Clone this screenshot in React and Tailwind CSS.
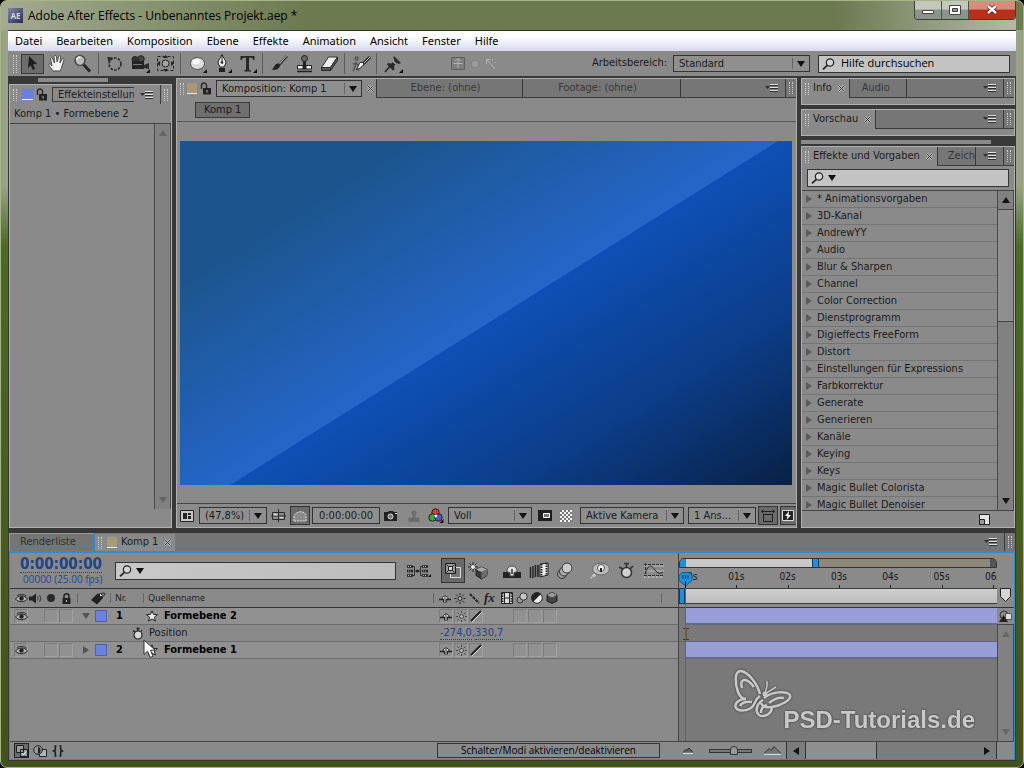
import { useState } from "react";

const presets = [
  "* Animationsvorgaben",
  "3D-Kanal",
  "AndrewYY",
  "Audio",
  "Blur & Sharpen",
  "Channel",
  "Color Correction",
  "Dienstprogramm",
  "Digieffects FreeForm",
  "Distort",
  "Einstellungen für Expressions",
  "Farbkorrektur",
  "Generate",
  "Generieren",
  "Kanäle",
  "Keying",
  "Keys",
  "Magic Bullet Colorista",
  "Magic Bullet Denoiser",
];

const menus = ["Datei", "Bearbeiten", "Komposition", "Ebene", "Effekte", "Animation", "Ansicht", "Fenster", "Hilfe"];

/* ---------- small shared pieces ---------- */

function Icon({ w = 16, h = 16, children, className = "" }) {
  return (
    <svg width={w} height={h} viewBox={`0 0 ${w} ${h}`} className={`shrink-0 ${className}`} aria-hidden="true">
      {children}
    </svg>
  );
}

function Grip() {
  return <span className="h-3 w-1 shrink-0 border-x border-dotted border-[#d0d0d0]" />;
}

function PanelMenu() {
  return (
    <button aria-label="Panelmenü" className="shrink-0">
      <Icon w={14} h={10}>
        <path d="M0 3h5L2.500 6z" fill="#2e2e2e" />
        <path d="M5 1.500h8M5 4.500h8M5 7.500h8" stroke="#e0e0e0" />
        <path d="M5 2.500h8M5 5.500h8M5 8.500h8" stroke="#303030" />
      </Icon>
    </button>
  );
}

function PanelEnd() {
  return (
    <div className="ml-auto flex items-center self-stretch">
      <PanelMenu />
      <div className="ml-1.5 flex items-center self-stretch border-l border-[#3a3a3a] px-[3px]">
        <Grip />
      </div>
    </div>
  );
}

function Cross() {
  return (
    <Icon w={7} h={7}>
      <path d="M.5.500l6 6M6.500.500l-6 6" stroke="#c4c4c4" strokeWidth="2" />
      <path d="M.5.500l6 6M6.500.500l-6 6" stroke="#2a2a2a" />
    </Icon>
  );
}

function Swatch() {
  return <span className="h-[11px] w-[10px] shrink-0 border-b border-[#efefef] bg-[#a89a78]" />;
}

function Lock() {
  return (
    <Icon w={11} h={13}>
      <path d="M1.500 7V3.500a2.500 2.500 0 0 1 5 0V6" fill="none" stroke="#2c2c2c" strokeWidth="1.500" />
      <path d="M3 6h8v6.500H3z" fill="#242424" />
      <path d="M6.500 8h1v2.500h-1z" fill="#bbb" />
    </Icon>
  );
}

function Magnifier() {
  return (
    <Icon w={13} h={12}>
      <circle cx="8" cy="4.500" r="3.700" fill="#d5d5d5" stroke="#222" strokeWidth="1.200" />
      <path d="M5.300 7.300L1 11.300" stroke="#222" strokeWidth="1.700" />
    </Icon>
  );
}

function Arrow({ dir = "down", color = "#111" }) {
  const paths = {
    down: "M0 1h8L4 7z",
    up: "M0 7h8L4 1z",
    left: "M7 0v8L1 4z",
    right: "M1 0v8l6-4z",
  };
  return (
    <Icon w={8} h={8}>
      <path d={paths[dir]} fill={color} />
    </Icon>
  );
}

function Dropdown({ label, value, className = "" }) {
  return (
    <div className={`relative flex h-[17px] shrink-0 items-center border border-[#333] bg-[#8f8f8f] ${className}`}>
      <select
        aria-label={label}
        defaultValue={value}
        className="h-full w-full appearance-none bg-transparent pr-4 pl-[5px] text-[11px] leading-[15px] outline-none"
      >
        <option>{value}</option>
      </select>
      <span className="pointer-events-none absolute right-0 flex h-[11px] items-center border-l border-[#666] px-1">
        <Arrow />
      </span>
    </div>
  );
}

function VScroll({ active, thumb }) {
  const color = active ? "#111" : "#666";
  return (
    <div className="flex w-[17px] shrink-0 flex-col border-x border-[#4a4a4a] bg-[#818181]">
      <button aria-label="Nach oben" className="flex h-[18px] items-center justify-center">
        <Arrow dir="up" color={color} />
      </button>
      <div className="flex-1">{thumb && <div className="h-2/5 border-y border-[#444] bg-[#8f8f8f]" />}</div>
      <button aria-label="Nach unten" className="flex h-[18px] items-center justify-center">
        <Arrow color={color} />
      </button>
    </div>
  );
}

/* ---------- window frame ---------- */

function TitleBar() {
  return (
    <header className="-mx-[7px] flex h-[29px] shrink-0 items-center justify-between rounded-t-[6px] bg-linear-to-r from-[#a3ab92] via-[#6c7a50] via-30% to-[#6c7a50] to-80% px-[7px]">
      <div className="flex items-center gap-[5px]">
        <div className="flex size-[15px] items-center justify-center bg-linear-to-br from-[#8588ac] to-[#2b2d4d] font-['Noto_Sans'] text-[8px] font-bold text-[#d8d8ee]">
          AE
        </div>
        <h1 className="font-['Open_Sans',sans-serif] text-[12px] text-black">
          Adobe After Effects - Unbenanntes Projekt.aep *
        </h1>
      </div>
      <div className="flex h-full flex-1 justify-end bg-linear-to-r from-transparent from-75% to-[#b3baa8]">
        <div className="flex h-[19px] self-start overflow-hidden rounded-b-[4px] border border-t-0 border-[#3c4138]">
          <button
            aria-label="Minimieren"
            className="flex w-[27px] items-center justify-center border-r border-[#4c5248] bg-linear-to-b from-[#c3c8bd] from-45% to-[#8c9388] to-50%"
          >
            <Icon w={12} h={12}>
              <path d="M.5 6.500h11v3H.5z" fill="#fff" stroke="#444" />
            </Icon>
          </button>
          <button
            aria-label="Maximieren"
            className="flex w-[27px] items-center justify-center border-r border-[#4c5248] bg-linear-to-b from-[#c3c8bd] from-45% to-[#8c9388] to-50%"
          >
            <Icon w={12} h={12}>
              <path d="M.5 1.500h11v9H.5z" fill="#fff" stroke="#444" />
              <path d="M3.500 4.500h5v3h-5z" fill="#8c9388" stroke="#444" />
            </Icon>
          </button>
          <button
            aria-label="Fenster schließen"
            className="flex w-[46px] items-center justify-center bg-linear-to-b from-[#d88c7a] from-45% to-[#b8301d] to-50%"
          >
            <Icon w={12} h={12}>
              <path d="M2 2l8 7M10 2L2 9" stroke="#4d1a14" strokeWidth="4" />
              <path d="M2 2l8 7M10 2L2 9" stroke="#fff" strokeWidth="2.400" />
            </Icon>
          </button>
        </div>
      </div>
    </header>
  );
}

function MenuBar() {
  return (
    <nav className="flex h-[21px] shrink-0 items-center gap-[14px] border-t border-[#333] bg-linear-to-b from-white from-30% to-[#d6daee] pl-[7px] font-['Noto_Sans',sans-serif] text-[11px] text-black">
      {menus.map((m) => (
        <button key={m}>{m}</button>
      ))}
    </nav>
  );
}

/* ---------- toolbar ---------- */

const corner = <path d="M22 16v4h-4z" fill="#111" />;

const tools = [
  {
    name: "Auswahl",
    art: <path d="M9 5l8 8-4 .3 2 4.700-2.200 1-2-4.700L8 17z" transform="translate(-1 -2)" fill="#1d1d1d" />,
  },
  {
    name: "Hand",
    art: (
      <path
        d="M7 18c-2-3-4-5-4.500-7 1-1 2 0 3.500 2L4.500 5.500c.5-1.500 2-1 2.300.5L8.500 10 8 3.500c.5-1.500 2-1.500 2.400 0L11.200 9l1.300-5.500c.6-1.200 2.200-.8 2 .6L14 10l2-4c1-1 2.300-.3 1.900 1L16 13c-.4 2-1 3.500-2 5z"
        fill="#f2f2f2"
        stroke="#4a4a4a"
      />
    ),
  },
  {
    name: "Zoom",
    art: (
      <>
        <path d="M12.500 11.500l6.500 7" stroke="#262626" strokeWidth="3" />
        <circle cx="9" cy="7.500" r="5" fill="#bcbcbc" stroke="#4a4a4a" strokeWidth="1.600" />
        <path d="M5.500 7a3.500 3.500 0 0 1 4-3" stroke="#fff" strokeWidth="1.500" fill="none" />
      </>
    ),
    sep: true,
  },
  {
    name: "Drehen",
    art: (
      <>
        <circle cx="12" cy="11" r="6" fill="none" stroke="#2a2a2a" strokeWidth="1.700" strokeDasharray="2.400 1.400" />
        <path d="M4 4l6 .5-4 5z" fill="#2a2a2a" />
      </>
    ),
  },
  {
    name: "Kamera",
    art: (
      <>
        <circle cx="7" cy="6.500" r="3" fill="#333" stroke="#222" />
        <circle cx="13" cy="6" r="3.300" fill="#444" stroke="#222" />
        <path d="M4 8h12v8H4z" fill="#242424" />
        <path d="M16 12l5-2v6l-5-1z" fill="#2b2b2b" />
        <path d="M5 11.500h9" stroke="#777" />
        {corner}
      </>
    ),
  },
  {
    name: "Ausschnitt",
    art: (
      <>
        <path d="M4.500 3.500h16v14h-16z" fill="none" stroke="#222" strokeDasharray="3 2" />
        <circle cx="12.500" cy="10.500" r="3.500" fill="#a5a5a5" stroke="#222" />
        <path d="M12.500 2l2.500 3h-5zM12.500 19l2.500-3h-5zM4 10.500L7 8v5zM21 10.500L18 8v5z" fill="#222" />
      </>
    ),
    sep: true,
  },
  {
    name: "Ellipse",
    art: (
      <>
        <ellipse cx="12.500" cy="10.500" rx="7" ry="6" fill="#dcdcdc" stroke="#505050" />
        <ellipse cx="11" cy="8.500" rx="4" ry="2.700" fill="#fafafa" />
        {corner}
      </>
    ),
  },
  {
    name: "Zeichenstift",
    art: (
      <>
        <path d="M12 1.500c1 3 4 5.500 4 8.500l-2 4h-4l-2-4c0-3 3-5.500 4-8.500z" fill="#ececec" stroke="#222" />
        <path d="M12 3v6" stroke="#222" />
        <circle cx="12" cy="9.500" r="1.300" fill="#222" />
        <path d="M9 15h6v4H9z" fill="#222" />
        {corner}
      </>
    ),
  },
  {
    name: "Text",
    art: (
      <>
        <path
          d="M5.500 3h14v4h-1.200c-.4-1.700-1-2.300-2.600-2.300H14v11c0 1.300.4 1.600 2 1.800V18.500H9v-1c1.600-.2 2-.5 2-1.800v-11H9.300C7.700 4.700 7.100 5.300 6.700 7H5.500z"
          fill="#272727"
        />
        {corner}
      </>
    ),
    sep: true,
  },
  {
    name: "Pinsel",
    art: (
      <>
        <path d="M20 3l-8 9" stroke="#202020" strokeWidth="2.400" />
        <path d="M20 2.500l-8 9" stroke="#ccc" strokeWidth="1" />
        <path d="M12.500 11c1 1.500.5 3.500-2 5-2 1-4 1-6 .5 2.500-1 2.500-3.500 4-5 1.200-1 3-1.300 4-.5z" fill="#202020" />
      </>
    ),
  },
  {
    name: "Kopierstempel",
    art: (
      <>
        <circle cx="12.500" cy="5.500" r="3" fill="#666" stroke="#222" />
        <path d="M11 8.500h3v4h-3z" fill="#222" />
        <path d="M5.500 12.500h14v3.500h-14z" fill="#eee" stroke="#222" />
        <path d="M10.500 12.500h4v3.500h-4z" fill="#222" />
        <path d="M5 18.500h15" stroke="#222" strokeWidth="1.500" />
      </>
    ),
  },
  {
    name: "Radiergummi",
    art: (
      <>
        <path d="M11.500 4h9l-7 10.500h-9z" fill="#ededed" stroke="#303030" />
        <path d="M4.500 14.500h9v3h-9zM13.500 17.500l7-10V4l-7 10.500z" fill="#555" stroke="#2a2a2a" />
      </>
    ),
    sep: true,
  },
  {
    name: "Roto-Pinsel",
    art: (
      <>
        <path d="M4 18c2-3 2-6 3-8l-3 1M7 10l3 3-1 5M7.500 4a1.500 1.500 0 1 0 .1 0" stroke="#555" fill="none" strokeWidth="1.500" />
        <path d="M21 4l-7 7" stroke="#222" strokeWidth="3" />
        <path d="M21 4l-7 7" stroke="#ccc" />
        <path d="M14 9.500c1.500 1.500 0 5-6.500 7 1.500-2 2-6 4-7z" fill="#f0f0f0" stroke="#222" />
      </>
    ),
    sep: true,
  },
  {
    name: "Marionette",
    art: (
      <>
        <path
          d="M12 2l7 7-2 1-2-1-3 3 .5 3.500-1.500 1L5 10.500l1-1.500 3.500.5 3-3L11.500 4z"
          fill="#2a2a2a"
          transform="translate(1 1)"
        />
        <path d="M9 13l-5 6" stroke="#222" strokeWidth="1.400" />
        <path d="M12 8l3 3" stroke="#aaa" strokeWidth="1.500" />
        {corner}
      </>
    ),
  },
];

function Toolbar() {
  const [tool, setTool] = useState("Auswahl");
  return (
    <div className="flex h-[25px] shrink-0 items-center bg-[#8a8a8a] pr-[6px] pl-[5px]">
      <span className="mr-[3px] h-[18px] w-1 border-x border-dotted border-[#d0d0d0]" />
      {tools.map((t) => (
        <div key={t.name} className="flex shrink-0 items-center">
          <button
            aria-label={t.name}
            onClick={() => setTool(t.name)}
            className={
              tool === t.name
                ? "mx-px flex h-5 w-[23px] items-center justify-center border border-[#3a3a3a] bg-[#6c6c6c]"
                : "flex h-5 w-[25px] items-center justify-center"
            }
          >
            <Icon w={24} h={21}>
              {t.art}
            </Icon>
          </button>
          {t.sep && <span className="mx-[3px] h-[21px] w-px bg-[#5c5c5c]" />}
        </div>
      ))}
      <div className="ml-[46px] flex items-center gap-1 opacity-60">
        <Icon w={14} h={13}>
          <path d="M.5.500h13v12H.5z" fill="#777" stroke="#444" />
          <path d="M7 2v9M2.500 6.500h9M4 4L7 1.500 10 4" stroke="#ccc" fill="none" />
        </Icon>
        <Icon w={12} h={12}>
          <circle cx="6" cy="6" r="4" fill="#a9a9a9" stroke="#777" />
        </Icon>
        <Icon w={12} h={12}>
          <path d="M1.500 6V1.500H6M2 2l8 9M7 2h1M10 4v1" stroke="#ccc" fill="none" />
        </Icon>
      </div>
      <span className="mr-1.5 ml-auto text-[11px]">Arbeitsbereich:</span>
      <Dropdown label="Arbeitsbereich" value="Standard" className="w-[137px]" />
      <label className="ml-2 flex h-[18px] w-[192px] shrink-0 items-center gap-1.5 border border-[#333] bg-[#c4c4c4] pl-[3px]">
        <Magnifier />
        <input
          aria-label="Hilfe durchsuchen"
          placeholder="Hilfe durchsuchen"
          className="w-full min-w-0 font-['Open_Sans',sans-serif] text-[11px] outline-none placeholder:text-black placeholder:opacity-100"
        />
      </label>
    </div>
  );
}

/* ---------- upper panels ---------- */

function EffectControls() {
  return (
    <aside className="flex w-[163px] shrink-0 flex-col">
      <div className="mt-[2px] mr-16 mb-[2px] ml-[29px] h-1 shrink-0 bg-[#8a8a8a]" />
      <div className="flex min-h-0 flex-1 flex-col border border-[#b0b0b0] bg-[#8a8a8a]">
        <div className="flex h-[19px] shrink-0 items-center gap-[3px] pl-[3px]">
          <Grip />
          <span className="ml-0.5 h-[11px] w-[11px] shrink-0 border-b border-[#efefef] bg-[#6a7fdc]" />
          <Lock />
          <button
            role="tab"
            className="ml-0.5 h-[15px] w-[82px] shrink-0 overflow-hidden border border-r-0 border-[#3a3a3a] pl-[5px] text-left text-[11px] leading-[13px] whitespace-nowrap"
          >
            Effekteinstellungen
          </button>
          <PanelEnd />
        </div>
        <p className="h-[20px] shrink-0 border-b border-[#444] pl-1 text-[11px] leading-[19px]">Komp 1 • Formebene 2</p>
        <div className="flex min-h-0 flex-1 justify-end pb-[18px]">
          <VScroll />
        </div>
      </div>
    </aside>
  );
}

function ViewerTabs() {
  return (
    <div className="flex h-[19px] shrink-0 items-stretch text-[11px]">
      <div className="flex items-center gap-[3px] pr-[2px] pl-[3px]">
        <Grip />
        <Swatch />
        <Lock />
        <Dropdown label="Komposition" value="Komposition: Komp 1" className="mx-0.5 w-[146px]" />
        <button aria-label="Schließen" className="shrink-0">
          <Cross />
        </button>
      </div>
      <div className="flex flex-1 items-stretch border-b border-l border-[#3a3a3a] bg-[#767676] text-[#383838]">
        <button role="tab" className="w-[146px] shrink-0 border-r border-[#3a3a3a] pr-2">
          Ebene: (ohne)
        </button>
        <button role="tab" className="w-[158px] shrink-0 border-r border-[#3a3a3a] pr-2">
          Footage: (ohne)
        </button>
        <PanelEnd />
      </div>
    </div>
  );
}

function Artwork() {
  return (
    <svg viewBox="0 0 612 344" preserveAspectRatio="none" className="block size-full" role="img" aria-label="Komp 1">
      <defs>
        <linearGradient id="upper" gradientUnits="userSpaceOnUse" x1="64" y1="102" x2="169" y2="269">
          <stop offset="0" stopColor="#1c558d" />
          <stop offset="1" stopColor="#2466c9" />
        </linearGradient>
        <linearGradient id="lower" gradientUnits="userSpaceOnUse" x1="169" y1="269" x2="328" y2="523">
          <stop offset="0" stopColor="#0d50b5" />
          <stop offset="0.5" stopColor="#0c3d88" />
          <stop offset="1" stopColor="#082144" />
        </linearGradient>
      </defs>
      <path d="M0 0h612v344H0z" fill="url(#lower)" />
      <path d="M0 0h598L50 344H0z" fill="url(#upper)" />
    </svg>
  );
}

const pressed = "flex h-[19px] shrink-0 items-center justify-center border border-[#333] bg-[#6b6b6b]";

function ViewerFooter() {
  return (
    <div className="flex h-[24px] shrink-0 items-center overflow-hidden border-t border-[#444] pl-[3px] text-[11px]">
      <Icon w={14} h={12}>
        <path d="M.5.500h13v11H.5z" fill="#c9c9c9" stroke="#222" />
        <path d="M3 3h4v6H3zM8 3h3v2H8zM8 6h3v3H8z" fill="#222" />
      </Icon>
      <Dropdown label="Vergrößerung" value="(47,8%)" className="ml-[5px] w-[68px]" />
      <Icon w={15} h={13} className="mx-1">
        <path d="M1.500 3.500h12v7h-12zM7.500 0v13M0 7h15" fill="none" stroke="#2a2a2a" />
        <path d="M2.500 4.500h4v2h-4zM8.500 8h4v1.500h-4z" fill="#d0d0d0" />
      </Icon>
      <button aria-label="Maske" className={`${pressed} w-5`}>
        <Icon w={14} h={12}>
          <path d="M1 11V6c2-5 10-6 12-1v6z" fill="#8c8c8c" stroke="#e0e0e0" strokeDasharray="2 1" />
        </Icon>
      </button>
      <button className="ml-[2px] h-[17px] w-[68px] shrink-0 border border-[#333] bg-[#8f8f8f] leading-[15px]">
        0:00:00:00
      </button>
      <Icon w={14} h={12} className="ml-1">
        <path d="M0 2h4l1-1h4l1 1h3v9H0z" fill="#222" />
        <circle cx="6.500" cy="6.500" r="2.500" fill="#777" stroke="#ddd" />
        <path d="M11 3.500h2" stroke="#ddd" />
      </Icon>
      <Icon w={12} h={14} className="ml-[10px]">
        <circle cx="6" cy="4" r="2.500" fill="#6c6c6c" />
        <path d="M4.500 6h3v2.500h4V13H.5V8.500h4z" fill="#6c6c6c" />
      </Icon>
      <Icon w={16} h={15} className="ml-2">
        <circle cx="7.500" cy="4.500" r="3.700" fill="#d33a3a" stroke="#222" />
        <circle cx="4.500" cy="9.500" r="3.700" fill="#36a546" stroke="#222" />
        <circle cx="10.500" cy="9.500" r="3.700" fill="#5a50c0" stroke="#222" />
        <path d="M6 7.500l2-1 1.500 1L8 10z" fill="#eee" />
        <path d="M15.500 11v4h-4z" fill="#111" />
      </Icon>
      <Dropdown label="Auflösung" value="Voll" className="ml-1 w-[84px]" />
      <Icon w={14} h={11} className="ml-[6px]">
        <path d="M0 0h14v11H0z" fill="#1e1e1e" />
        <path d="M5.500 3.500h6v4h-6z" fill="#777" stroke="#fff" />
      </Icon>
      <Icon w={12} h={12} className="mx-[8px]">
        <path d="M0 0h12v12H0z" fill="#f2f2f2" />
        <path d="M0 1h12M0 5h12M0 9h12" stroke="#777" strokeWidth="2" strokeDasharray="2 2" />
        <path d="M2 3h10M2 7h10M2 11h10" stroke="#777" strokeWidth="2" strokeDasharray="2 2" />
      </Icon>
      <Dropdown label="3D-Ansicht" value="Aktive Kamera" className="w-[104px]" />
      <Dropdown label="Ansichten" value="1 Ans..." className="ml-1 w-[68px]" />
      <button aria-label="Pixelseitenverhältnis" className={`${pressed} ml-[2px] w-5`}>
        <Icon w={14} h={13}>
          <path d="M1 2.500h12M2.500.500L.5 2.500l2 2M11.500.500l2 2-2 2M2.500 5.500h9v7h-9z" fill="none" stroke="#1d1d1d" />
        </Icon>
      </button>
      <button aria-label="Schnelle Vorschau" className={`${pressed} ml-[2px] w-5 justify-start`}>
        <Icon w={14} h={13}>
          <path d="M1.500 1.500h11v10h-11z" fill="#222" stroke="#ddd" />
          <path d="M8 2L4 7h2.500L5.500 11 10 6H7.500z" fill="#fff" />
        </Icon>
      </button>
    </div>
  );
}

function Viewer() {
  return (
    <section className="mt-[2px] flex min-w-0 flex-1 flex-col border border-[#b0b0b0] bg-[#8a8a8a]">
      <ViewerTabs />
      <div className="flex h-[24px] shrink-0 items-center border-b border-[#555] pl-[18px]">
        <button className="h-4 border border-[#3a3a3a] bg-[#6f6f6f] px-2 text-[11px] leading-[14px]">Komp 1</button>
      </div>
      <div className="min-h-0 flex-1 pt-[19px] pr-[4px] pb-[18px] pl-[3px]">
        <Artwork />
      </div>
      <ViewerFooter />
    </section>
  );
}

function TabStrip({ title, other, otherClass = "" }) {
  return (
    <div className="flex h-[19px] shrink-0 items-stretch text-[11px] whitespace-nowrap">
      <button role="tab" className="flex items-center gap-1 pr-1 pl-[3px]">
        <Grip />
        <span className="mr-0.5">{title}</span>
        <Cross />
      </button>
      <div className="flex min-w-0 flex-1 items-stretch border-b border-l border-[#3a3a3a] bg-[#767676] text-[#383838]">
        {other && (
          <button role="tab" className={`border-r border-[#3a3a3a] ${otherClass}`}>
            {other}
          </button>
        )}
        <PanelEnd />
      </div>
    </div>
  );
}

function RightColumn() {
  return (
    <aside className="mt-[2px] flex w-[214px] shrink-0 flex-col">
      <div className="mb-1 h-[27px] shrink-0 border border-[#b0b0b0] bg-[#8a8a8a]">
        <TabStrip title="Info" other="Audio" otherClass="w-[57px] pr-1" />
      </div>
      <div className="mb-1 h-[27px] shrink-0 border border-[#b0b0b0] bg-[#8a8a8a]">
        <TabStrip title="Vorschau" />
      </div>
      <div className="mr-6 mb-[2px] h-1 shrink-0 bg-[#8a8a8a]" />
      <div className="flex min-h-0 flex-1 flex-col border border-[#b0b0b0] bg-[#8a8a8a]">
        <TabStrip title="Effekte und Vorgaben" other="Zeich" otherClass="pl-[10px]" />
        <label className="mx-[5px] my-[3px] flex h-[18px] shrink-0 items-center gap-1 border border-[#333] bg-[#c4c4c4] pl-[3px]">
          <Magnifier />
          <Arrow />
          <input aria-label="Effekte suchen" className="w-full min-w-0 text-[11px] outline-none" />
        </label>
        <div className="flex min-h-0 flex-1 border-y border-[#444]">
          <ul className="min-w-0 flex-1 overflow-hidden text-[11px]">
            {presets.map((name) => (
              <li key={name} className="h-[17px] border-b border-[#747474]">
                <button className="flex h-4 items-center gap-1 pl-[3px] whitespace-nowrap">
                  <Arrow dir="right" color="#5a5a5a" />
                  {name}
                </button>
              </li>
            ))}
          </ul>
          <VScroll active thumb />
        </div>
        <div className="flex h-[16px] shrink-0 items-center justify-end pr-6">
          <Icon w={11} h={11}>
            <path d="M.5.500h10v10H.5z" fill="#e4e4e4" stroke="#222" />
            <path d="M.5 5.500h5v5h-5z" fill="#999" stroke="#222" />
          </Icon>
        </div>
      </div>
    </aside>
  );
}

/* ---------- timeline ---------- */

function Eye() {
  return (
    <Icon w={13} h={9}>
      <path d="M.5 5C3 1 10 1 12.500 5 10 8.500 3 8.500.500 5z" fill="#b5b5b5" stroke="#222" />
      <circle cx="6.500" cy="4.500" r="2.200" fill="#222" />
      <path d="M2 1.500C5-.3 9 0 11.500 2" fill="none" stroke="#333" />
    </Icon>
  );
}

function Shy() {
  return (
    <Icon w={12} h={10}>
      <path d="M0 6.500h12" stroke="#222" strokeWidth="1.500" />
      <path d="M3 6c0-4 6-4 6 0L7.500 6v3h-3V6z" fill="#ededed" stroke="#222" />
      <path d="M6 4v4" stroke="#222" />
    </Icon>
  );
}

function Sun({ color = "#222" }) {
  return (
    <Icon w={11} h={11}>
      <circle cx="5.500" cy="5.500" r="2" fill="#b5b5b5" stroke={color} />
      <path
        d="M5.500 0v2M5.500 9v2M0 5.500h2M9 5.500h2M1.500 1.500l1.500 1.500M8 8l1.500 1.500M9.500 1.500L8 3M3 8L1.500 9.500"
        stroke={color}
      />
    </Icon>
  );
}

function Box({ children }) {
  return (
    <span className="flex size-[14px] shrink-0 items-center justify-center border border-t-[#7c7c7c] border-r-[#a0a0a0] border-b-[#a0a0a0] border-l-[#7c7c7c]">
      {children}
    </span>
  );
}

function Stopwatch() {
  return (
    <Icon w={11} h={13}>
      <circle cx="6" cy="8" r="4" fill="#d8d8d8" stroke="#222" strokeWidth="1.200" />
      <path d="M4.500 1.500h3M6 2v2M1 3.500l2 1.500M10 3L9 4.500" stroke="#222" strokeWidth="1.300" />
    </Icon>
  );
}

function LayerRow({ nr, name, open }) {
  return (
    <div className="flex h-[17px] items-center border-b border-[#6c6c6c] bg-[#919191] pl-1 text-[11px]">
      <span className="w-[30px] shrink-0">
        <Box>
          <Eye />
        </Box>
      </span>
      <span className="flex w-[31px] shrink-0 gap-px">
        <Box />
        <Box />
      </span>
      <button aria-label="Ebene aufklappen" className="w-5 shrink-0 pl-[7px]">
        <Arrow dir={open ? "down" : "right"} color="#555" />
      </button>
      <span className="mr-[9px] size-3 shrink-0 border border-[#555fa8] bg-[#6a82e0]" />
      <span className="w-[30px] shrink-0 font-bold text-black">{nr}</span>
      <span className="w-[18px] shrink-0">
        <Icon w={12} h={12}>
          <path
            d="M6 .8l1.500 3.600 3.900.3-3 2.500 1 3.800L6 9l-3.400 2 1-3.800-3-2.500 3.900-.3z"
            fill="#e8e8e8"
            stroke="#222"
          />
        </Icon>
      </span>
      <span className="flex-1 font-bold text-black">{name}</span>
      <div className="flex w-[239px] shrink-0 items-center gap-px">
        <Box>
          <Shy />
        </Box>
        <Box>
          <Sun color="#444" />
        </Box>
        <Box>
          <Icon w={12} h={12}>
            <path d="M1 11L11 1" stroke="#222" strokeWidth="2" />
            <path d="M2 12L12 2" stroke="#ddd" />
          </Icon>
        </Box>
        <span className="w-7" />
        <Box />
        <Box />
        <Box />
      </div>
    </div>
  );
}

function TimelineTools() {
  return (
    <div className="flex h-9 shrink-0 items-center border-b border-[#333] pl-[10px]">
      <div className="w-[95px] shrink-0">
        <button className="block border-b border-dotted border-[#1c4488] text-[15px] leading-[16px] font-bold text-[#1c4488]">
          0:00:00:00
        </button>
        <p className="pl-[3px] font-['Open_Sans',sans-serif] text-[10px] leading-[13px] whitespace-nowrap text-[#24478a]">
          00000 (25.00 fps)
        </p>
      </div>
      <label className="flex h-[18px] min-w-0 flex-1 items-center gap-1 border border-[#333] bg-linear-to-r from-[#c8c8c8] to-[#bcbcbc] pl-[3px]">
        <Magnifier />
        <Arrow />
        <input aria-label="Ebenen suchen" className="w-full min-w-0 text-[11px] outline-none" />
      </label>
      <Icon w={24} h={14} className="mr-[10px] ml-[11px]">
        <path d="M0 2.500h6M0 7h6M0 11.500h6M15 2.500h6M15 7h6M15 11.500h6" stroke="#222" strokeWidth="2.500" />
        <path d="M1 2.500h4M1 7h4M1 11.500h4M16 2.500h4M16 7h4M16 11.500h4" stroke="#bbb" strokeDasharray="1 1" />
        <path d="M6 2.500h1.500v9H6M15 2.500h-1.500v9H15M7 7h7" stroke="#333" fill="none" />
        <circle cx="10.500" cy="7" r="1.500" fill="#222" />
        <path d="M24 10v3h-3z" fill="#111" />
      </Icon>
      <button
        aria-label="Live-Update"
        className="flex h-[25px] w-6 shrink-0 items-center justify-center border border-[#333] bg-[#696969]"
      >
        <Icon w={18} h={17}>
          <path d="M6.500 5.500h10v10h-10z" fill="#777" stroke="#ddd" />
          <path d="M1.500 1.500h10v10h-10z" fill="#9a9a9a" stroke="#1d1d1d" />
          <path d="M2.500 2.500l8 8M10.500 2.500l-8 8" stroke="#222" />
          <path d="M4.500 4.500h4v4h-4z" fill="#ddd" stroke="#222" />
        </Icon>
      </button>
      <Icon w={20} h={18} className="ml-[3px]">
        <path d="M5 0v10M0 5h10M1.500 1.500l7 7M8.500 1.500l-7 7" stroke="#222" />
        <circle cx="5" cy="5" r="2" fill="#eee" />
        <path d="M13.500 5l5.500 2.500v6L13.500 17 8 13.500v-6z" fill="#3a3a3a" stroke="#222" />
        <path d="M13.500 5L19 7.500 13.500 10 8 7.500z" fill="#aaa" />
        <path d="M13.500 10L19 7.500v6L13.500 17z" fill="#6c6c6c" />
      </Icon>
      <Icon w={18} h={16} className="ml-[15px]">
        <path d="M0 9h18v6H0z" fill="#242424" />
        <path d="M4 9c-1-8 11-8 10 0l-3 .5V13H7V9.500z" fill="#dedede" stroke="#444" />
        <path d="M9 6v5" stroke="#333" strokeWidth="1.500" />
      </Icon>
      <Icon w={20} h={17} className="ml-2">
        <path d="M1.500 5v11M4 4v12M6.500 3v12M9 3v12" stroke="#222" strokeWidth="1.500" />
        <path d="M11 2l8-1v12l-8 2z" fill="#eee" stroke="#222" />
        <path d="M12.500 2v13M17.500 1v13" stroke="#222" strokeWidth="2" strokeDasharray="1.500 1" />
      </Icon>
      <Icon w={18} h={18} className="ml-[7px]">
        <circle cx="6" cy="12" r="4.500" fill="#999" stroke="#333" />
        <circle cx="8" cy="9.500" r="4.500" fill="#aaa" stroke="#333" />
        <circle cx="11" cy="6" r="5" fill="#ccc" stroke="#333" />
      </Icon>
      <Icon w={20} h={17} className="ml-4">
        <ellipse cx="11" cy="7" rx="8.500" ry="6" fill="#bbb" stroke="#666" />
        <circle cx="11" cy="6" r="3.500" fill="#f5f5f5" stroke="#555" />
        <path d="M10 6h2v4h-2z" fill="#222" />
        <circle cx="4" cy="13.500" r="1.700" fill="#ccc" />
        <circle cx="1.500" cy="15.500" r="1" fill="#ccc" />
      </Icon>
      <Icon w={16} h={17} className="ml-2">
        <circle cx="8.500" cy="10.500" r="5" fill="#d0d0d0" stroke="#333" strokeWidth="1.500" />
        <path d="M6 1.500h5M8.500 2v3M1 5l4 2M15 4l-3 3" stroke="#333" strokeWidth="1.700" />
      </Icon>
      <Icon w={20} h={15} className="mr-[14px] ml-[10px]">
        <path d="M0 3h20M0 8h20" stroke="#bbb" />
        <path d="M1.500 0v14M0 1.500h20M0 12.500h20" stroke="#333" strokeDasharray="3 1" fill="none" />
        <path d="M1 11C5-1 8 3 11 7s5 4 8 2" stroke="#222" fill="none" />
        <path d="M0 14h20" stroke="#ddd" strokeDasharray="2 2" />
      </Icon>
    </div>
  );
}

function ColumnHeads() {
  return (
    <div className="flex h-[19px] shrink-0 items-center border-b border-[#333] pl-[5px] font-['Noto_Sans',sans-serif] text-[9px] text-[#222]">
      <Eye />
      <Icon w={14} h={11} className="ml-px">
        <path d="M0 3.500h3L7 .500v10L3 7.500H0z" fill="#222" />
        <path d="M8.500 3.500q1.500 2 0 4M10.500 2q3 3.500 0 7" stroke="#333" fill="none" />
      </Icon>
      <Icon w={8} h={8} className="ml-1">
        <circle cx="4" cy="4" r="4" fill="#2a2a2a" />
      </Icon>
      <Icon w={9} h={11} className="ml-[7px]">
        <path d="M2 6V3c0-3 5-3 5 0v3" fill="none" stroke="#222" strokeWidth="1.500" />
        <path d="M.5 5h8v6h-8z" fill="#222" />
        <path d="M4 7h1v2H4z" fill="#bbb" />
      </Icon>
      <span className="ml-[6px] h-[10px] w-px bg-[#666]" />
      <Icon w={15} h={13} className="ml-[13px]">
        <path d="M0 8l6-6 5-1 1 5-6 6.500z" fill="#222" />
        <circle cx="10" cy="3" r="1.200" fill="#ddd" />
        <path d="M10 3c2-3 4-2 4-1s-1 2-2 2" stroke="#222" fill="none" />
      </Icon>
      <span className="ml-[4px] h-[10px] w-px bg-[#666]" />
      <span className="w-8 shrink-0 pl-1">Nr.</span>
      <span className="h-[10px] w-px bg-[#666]" />
      <span className="flex-1 pl-1">Quellenname</span>
      <span className="mr-[5px] h-[10px] w-px bg-[#666]" />
      <div className="flex w-[239px] shrink-0 items-center gap-[3px]">
        <Shy />
        <Icon w={12} h={11}>
          <circle cx="6" cy="5.500" r="2" fill="#b5b5b5" stroke="#222" />
          <path
            d="M6 0v2M6 9v2M.5 5.500h2M9.500 5.500h2M2 1.500L3.500 3M8.500 8L10 9.500M10 1.500L8.500 3M3.500 8L2 9.500"
            stroke="#222"
          />
        </Icon>
        <Icon w={12} h={11}>
          <path d="M1 1l9 9" stroke="#222" strokeWidth="2" strokeDasharray="3 1" />
        </Icon>
        <span className="w-[12px] shrink-0 font-['Liberation_Serif',serif] text-[13px] leading-3 font-bold italic">
          fx
        </span>
        <Icon w={12} h={12} className="ml-[2px]">
          <path d="M.5.500h11v11H.5z" fill="#ddd" stroke="#222" />
          <path d="M3.500 0v12M8.500 0v12M3 6h6" stroke="#222" />
          <path d="M1.500 1v11M10.500 1v11" stroke="#222" strokeWidth="2" strokeDasharray="1.500 1" />
        </Icon>
        <Icon w={12} h={12}>
          <circle cx="4" cy="8" r="3" fill="#999" stroke="#333" />
          <circle cx="7.500" cy="4.500" r="3.700" fill="#c5c5c5" stroke="#333" />
        </Icon>
        <Icon w={12} h={12}>
          <circle cx="6" cy="6" r="5.300" fill="#eee" stroke="#222" />
          <path d="M2 10A5.500 5.500 0 0 1 10 2z" fill="#222" />
        </Icon>
        <Icon w={12} h={12}>
          <path d="M6 .5l5 2.500v6l-5 2.500L1 9V3z" fill="#444" stroke="#1d1d1d" />
          <path d="M6 .5L11 3 6 5.500 1 3z" fill="#999" />
        </Icon>
        <span className="mr-4 ml-auto h-[10px] w-px bg-[#666]" />
      </div>
    </div>
  );
}

function LayerList() {
  return (
    <div className="relative flex w-[668px] shrink-0 flex-col">
      <TimelineTools />
      <ColumnHeads />
      <LayerRow nr="1" name="Formebene 2" open />
      <div className="flex h-[17px] items-center border-b border-[#6c6c6c] pl-[122px] text-[11px]">
        <Stopwatch />
        <span className="flex-1 pl-[6px]">Position</span>
        <span className="w-[239px] shrink-0 pl-px text-[#27408c]">
          <a href="#x" className="border-b border-dotted border-[#27408c] leading-3">
            -274,0
          </a>
          ,
          <a href="#y" className="border-b border-dotted border-[#27408c] leading-3">
            330,7
          </a>
        </span>
      </div>
      <LayerRow nr="2" name="Formebene 1" />

      {/* mouse pointer */}
      <svg width="14" height="20" viewBox="0 0 14 20" className="absolute top-[86px] left-[133px]" aria-hidden="true">
        <path d="M1 1v14.500l3.500-3.300 2.700 6.200 2.800-1.200-2.600-6h4.800z" fill="#fff" stroke="#333" />
      </svg>
    </div>
  );
}

function Ruler() {
  return (
    <div className="relative flex min-w-0 flex-1 flex-col border-l border-[#444] bg-[#797979]">
      <div className="flex h-[35px] shrink-0 flex-col bg-[#8a8a8a] pt-[5px]">
        <div className="flex h-[10px] shrink-0 overflow-hidden rounded-t-[5px] border border-[#333] bg-[#8d887a]">
          <span className="w-[6px] bg-[#1c8fdf]" />
          <span className="w-2/5 bg-[#c8c8c8]" />
          <span className="w-[7px] border-x border-[#123c60] bg-[#1c8fdf]" />
          <span className="ml-auto w-[6px] bg-[#555]" />
        </div>
        <div className="flex flex-1 overflow-hidden pt-px pr-1 pl-[6px] text-[10px] text-[#151515]">
          {["0:00s", "01s", "02s", "03s", "04s", "05s"].map((s) => (
            <div key={s} className="flex w-0 flex-1 flex-col items-start justify-between">
              <span className="flex w-0 justify-center leading-4">{s}</span>
              <span className="h-1 w-px shrink-0 bg-[#222]" />
            </div>
          ))}
          <div className="flex w-0 flex-col items-start justify-between">
            <span className="flex w-0 justify-center leading-4">06s</span>
            <span className="h-1 w-px shrink-0 bg-[#222]" />
          </div>
        </div>
      </div>
      <div className="flex h-5 shrink-0 border-b border-[#333] bg-[#8a8a8a] pb-[3px]">
        <span className="w-[6px] border border-[#123c60] bg-[#1c8fdf]" />
        <span className="flex-1 border-y border-[#3a3a3a] bg-linear-to-b from-[#cfcfcf] to-[#bcbcbc]" />
      </div>
      <div className="ml-[6px] h-[17px] shrink-0 border-b-2 border-[#666a80] bg-[#989fd8]" />
      <div className="h-[17px] shrink-0 border-b border-[#666]" />
      <div className="ml-[6px] h-[17px] shrink-0 border-b-2 border-[#666a80] bg-[#989fd8]" />

      {/* current-time indicator */}
      <div className="pointer-events-none absolute inset-y-0 left-0 w-[14px]">
        <svg width="14" height="16" viewBox="0 0 14 16" className="absolute top-[19px]" aria-hidden="true">
          <path d="M0 3.500L3 .500h7L13 3.500v5L6.500 14 0 8.500z" fill="#1e90dc" stroke="#155a8c" />
          <path d="M4 3v4M6.500 3v4M9 3v4" stroke="#0c3f66" />
          <path d="M6.500 9v6" stroke="#111" />
        </svg>
        <svg width="8" height="12" viewBox="0 0 8 12" className="absolute top-[75px] left-[3px]" aria-hidden="true">
          <path d="M1 .5h6M4 .5v11M1 11.500h6" stroke="#5a2a2a" fill="none" />
        </svg>
        <div className="absolute top-[35px] bottom-0 left-[6px] w-px bg-[#ee2a1c]" />
      </div>

      {/* watermark */}
      <div className="absolute right-[22px] bottom-[5px] flex items-end drop-shadow-[0_0_1px_#333]">
        <svg width="60" height="50" viewBox="0 0 60 50" className="-mr-[10px] mb-[17px]" aria-hidden="true">
          <g fill="none" stroke="#c9c9c9" strokeWidth="2.500" strokeLinejoin="round">
            <path d="M27 25C24 14 15 3 8 2 1 2 2 15 5 23c2 5 4 7 8 7" />
            <path d="M9 19C6 10 13 7 21 18" />
            <path d="M13 30C5 30 1 35 3 39c3 4 13 3 17-2 3-4 2-7 7-10" />
            <path d="M7 37c1-3 6-5 12-4" />
            <path d="M31 29c7-6 22-8 26-3 2 5-10 11-18 12-6 1-10-1-11-4" />
            <path d="M51 29c-5-1-9 0-15 5" />
            <path d="M30 31c-7 4-8 12-4 15 5 3 12-1 13-7" />
            <path d="M28 44c0-4 2-7 6-8" />
          </g>
          <path d="M32 24c1-3 3-6 2-12M33 24c3-1 6-4 10-6" fill="none" stroke="#c9c9c9" strokeWidth="1.500" />
          <circle cx="32" cy="25" r="2.500" fill="#c9c9c9" />
        </svg>
        <span className="font-['Liberation_Sans',Arial,sans-serif] text-[24px] leading-8 font-bold text-[#c9c9c9]">
          PSD-Tutorials.de
        </span>
      </div>
    </div>
  );
}

function Timeline() {
  return (
    <section className="flex h-[227px] shrink-0 flex-col">
      <div className="flex h-[18px] shrink-0 items-stretch bg-[#757575] text-[11px]">
        <button role="tab" className="w-[85px] border-t border-l border-[#999] pl-[10px] text-left text-[#303030]">
          Renderliste
        </button>
        <button
          role="tab"
          className="flex items-center gap-1 border border-b-0 border-[#2f8ccd] bg-[#8a8a8a] pr-1 pl-[3px]"
        >
          <Grip />
          <span className="ml-px h-[11px] w-[10px] border-b border-[#efefef] bg-[#a89a78]" />
          <span className="pr-0.5">Komp 1</span>
          <Cross />
        </button>
        <PanelEnd />
      </div>
      <div className="flex min-h-0 flex-1 flex-col border border-t-2 border-[#2f8ccd] bg-[#8a8a8a]">
        <div className="flex min-h-0 flex-1">
          <LayerList />
          <Ruler />
          <div className="flex w-[17px] shrink-0 flex-col">
            <div className="flex h-[55px] items-end justify-center border-b border-[#333] pb-[5px]">
              <Icon w={11} h={14}>
                <path d="M.5.500h10v8l-5 5-5-5z" fill="#d4d4d4" stroke="#222" />
              </Icon>
            </div>
            <div className="flex h-[17px] items-center justify-center border-b border-[#444]">
              <Icon w={14} h={13}>
                <circle cx="5" cy="5" r="4" fill="none" stroke="#333" />
                <path d="M6.500 3.500h6v6h-6z" fill="#ddd" stroke="#555" />
                <path d="M0 12l4.500-7L9 12z" fill="#222" />
              </Icon>
            </div>
            <div className="flex flex-1">
              <VScroll />
            </div>
          </div>
        </div>
        <div className="flex h-[18px] shrink-0 items-center border-t border-[#444]">
          <button
            aria-label="Ebenenschalter"
            className="ml-1 flex h-[15px] w-[15px] items-center justify-center border border-[#222] bg-[#6c6c6c]"
          >
            <Icon w={12} h={12}>
              <path d="M.5.500h7v7h-7zM4.500 4.500h7v7h-7z" fill="#9a9a9a" stroke="#1d1d1d" />
              <path d="M6 8l1.500 2L10 6.500" stroke="#eee" fill="none" />
            </Icon>
          </button>
          <Icon w={14} h={12} className="ml-1">
            <path d="M6.500 4.500h7v7h-7z" fill="#b5b5b5" stroke="#222" />
            <circle cx="5" cy="5" r="4.300" fill="#999" stroke="#222" />
            <path d="M5 1.500a4 4 0 0 1 0 7.500z" fill="#222" />
          </Icon>
          <Icon w={12} h={12} className="ml-[5px]">
            <path d="M4.500 1H3.300v4L1.500 6l1.800 1v4h1.200M7.500 1h1.200v4l1.800 1-1.800 1v4H7.500" stroke="#222" strokeWidth="1.600" fill="none" />
          </Icon>
          <button className="mr-[17px] ml-auto h-[15px] w-[223px] border border-[#333] font-['Open_Sans',sans-serif] text-[10px] leading-[13px] text-black">
            Schalter/Modi aktivieren/deaktivieren
          </button>
          <div className="flex w-[337px] shrink-0 items-center self-stretch">
            <Icon w={10} h={7} className="ml-[6px]">
              <path d="M0 5.500l3-3 1 1L6 1l4 4.500" fill="#666" stroke="#222" />
              <path d="M0 6.500h10" stroke="#ddd" />
            </Icon>
            <div className="ml-4 flex h-3 w-[43px] items-center">
              <input
                type="range"
                aria-label="Zeitachsenzoom"
                defaultValue="60"
                className="h-[4px] w-full appearance-none border border-[#333] bg-[#777] [&::-webkit-slider-thumb]:h-[9px] [&::-webkit-slider-thumb]:w-2 [&::-webkit-slider-thumb]:appearance-none [&::-webkit-slider-thumb]:rounded-t-full [&::-webkit-slider-thumb]:border [&::-webkit-slider-thumb]:border-[#333] [&::-webkit-slider-thumb]:bg-[#999]"
              />
            </div>
            <Icon w={17} h={9} className="ml-3">
              <path d="M0 7.500l5-5 2 2 3-4 3 3 4 4" fill="#777" stroke="#333" />
              <path d="M0 8.500h17" stroke="#ddd" />
            </Icon>
            <div className="ml-[5px] flex flex-1 self-stretch border-x border-[#333] bg-[#7c7c7c]">
              <button aria-label="Nach links" className="flex w-[18px] items-center justify-center">
                <Arrow dir="left" />
              </button>
              <div className="w-[72px] border-x border-[#333] bg-[#8f8f8f]" />
              <button aria-label="Nach rechts" className="ml-auto flex w-[19px] items-center justify-center">
                <Arrow dir="right" />
              </button>
            </div>
            <span className="w-[17px]" />
          </div>
        </div>
      </div>
    </section>
  );
}

export default function App() {
  return (
    <div className="h-screen bg-black font-['DejaVu_Sans_Condensed','DejaVu_Sans',sans-serif] text-[#1a1a1a]">
      <div className="flex h-full flex-col overflow-hidden rounded-[7px] border border-[#a9b388] bg-linear-to-b from-[#9aa387] from-24% via-[#4b6a26] via-32% to-[#43501f] px-[7px] pb-[6px]">
        <TitleBar />
        <MenuBar />
        <Toolbar />
        <main className="flex min-h-0 flex-1 flex-col bg-[#383838] px-px pb-px">
          <div className="flex min-h-0 flex-1 gap-1 pb-[5px]">
            <EffectControls />
            <Viewer />
            <RightColumn />
          </div>
          <Timeline />
        </main>
      </div>
    </div>
  );
}
